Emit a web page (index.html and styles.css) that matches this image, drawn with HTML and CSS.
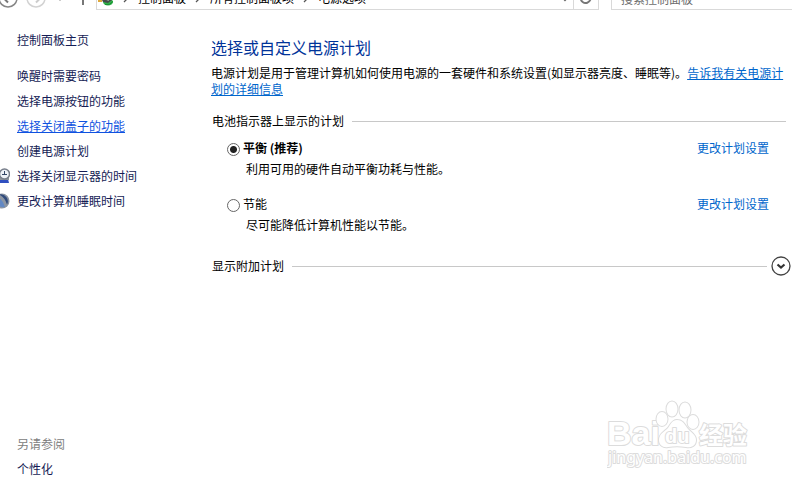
FILE: index.html
```html
<!DOCTYPE html>
<html lang="zh-CN">
<head>
<meta charset="utf-8">
<meta name="viewport" content="width=device-width, initial-scale=1">
<title>电源选项</title>
<link rel="stylesheet" href="styles.css">
</head>
<body>
<header class="toolbar">
  <button class="nav-button" type="button" aria-label="后退">
    <svg width="20" height="20" viewBox="0 0 20 20"><circle cx="10" cy="10" r="9" fill="none" stroke="#858585" stroke-width="1.5"/><path d="M15 10H6M10 5.500L5.500 10l4.500 4.500" fill="none" stroke="#777" stroke-width="2"/></svg>
  </button>
  <button class="nav-button" type="button" aria-label="前进">
    <svg width="20" height="20" viewBox="0 0 20 20"><circle cx="10" cy="10" r="9" fill="none" stroke="#d2d2d2" stroke-width="1.500"/><path d="M5 10h9M10 5.500l4.500 4.500-4.500 4.500" fill="none" stroke="#ccc" stroke-width="2"/></svg>
  </button>
  <button class="nav-button recent" type="button" aria-label="最近位置">
    <svg width="8" height="8" viewBox="0 0 8 8"><path d="M1 3l3 4 3-4z" fill="#777"/></svg>
  </button>
  <button class="nav-button up" type="button" aria-label="上移">
    <svg width="12" height="16" viewBox="0 0 12 16"><path d="M6 15V2M1 7l5-5 5 5" fill="none" stroke="#777" stroke-width="2"/></svg>
  </button>
  <nav class="address">
    <svg class="plug" width="16" height="16" viewBox="0 0 16 16"><ellipse cx="10" cy="12" rx="5" ry="3.500" fill="#31b34a"/><path d="M7 14.500q5 1 8-3" fill="none" stroke="#178c30"/><path d="M4 3l8 1 2 6-4 3-5-1-2-4z" fill="#454b49"/><path d="M6 8l5 2" stroke="#a5aaa8" stroke-width="2"/><path d="M0 11h4" stroke="#e0a93a" stroke-width="2"/></svg>
    <svg class="chevron" width="24" height="10" viewBox="0 0 24 10"><path d="M10 1l4 4-4 4" fill="none" stroke="#555" stroke-width="1.300"/></svg>
    <a href="#">控制面板</a>
    <svg class="chevron" width="24" height="10" viewBox="0 0 24 10"><path d="M10 1l4 4-4 4" fill="none" stroke="#555" stroke-width="1.300"/></svg>
    <a href="#">所有控制面板项</a>
    <svg class="chevron" width="24" height="10" viewBox="0 0 24 10"><path d="M10 1l4 4-4 4" fill="none" stroke="#555" stroke-width="1.300"/></svg>
    <a href="#">电源选项</a>
    <button class="history" type="button" aria-label="以前的位置"><svg width="8" height="8" viewBox="0 0 8 8"><path d="M0 2l4 4 4-4" fill="none" stroke="#666" stroke-width="2"/></svg></button>
    <button class="refresh" type="button" aria-label="刷新"><svg width="12" height="12" viewBox="0 0 12 12"><path d="M10 3.500A5 5 0 1 1 6 1" fill="none" stroke="#777" stroke-width="2"/></svg></button>
  </nav>
  <input class="search" type="search" placeholder="搜索控制面板" aria-label="搜索控制面板">
</header>

<div class="page">
  <aside class="sidebar">
    <a class="home" href="#">控制面板主页</a>
    <ul class="tasks">
      <li><a href="#">唤醒时需要密码</a></li>
      <li><a href="#">选择电源按钮的功能</a></li>
      <li><a class="active" href="#">选择关闭盖子的功能</a></li>
      <li><a href="#">创建电源计划</a></li>
      <li>
        <svg class="task-icon" width="16" height="16" viewBox="0 0 16 16"><path d="M4 11h10l1 4H3z" fill="#2f4fc0"/><path d="M3 9h12v3H3z" fill="#8b929b"/><circle cx="10.500" cy="6" r="5" fill="#eef2f7" stroke="#777e8a" stroke-width="1.500"/><path d="M10.500 3v3.500M8 6.500h5" fill="none" stroke="#344867"/></svg>
        <a href="#">选择关闭显示器的时间</a>
      </li>
      <li>
        <svg class="task-icon" width="16" height="16" viewBox="0 0 16 16"><circle cx="8" cy="8" r="7.500" fill="#8d96a3"/><path d="M5 1.500a7 7 0 0 1 8 10q-2-7-8-10z" fill="#2f4a7c"/><path d="M2 3q7 3 9 11-6 1-9-5z" fill="#6288c4"/></svg>
        <a href="#">更改计算机睡眠时间</a>
      </li>
    </ul>
    <div class="see-also">
      <span class="see-also-title">另请参阅</span>
      <a href="#">个性化</a>
    </div>
  </aside>

  <main class="content">
    <h1>选择或自定义电源计划</h1>
    <p class="intro">电源计划是用于管理计算机如何使用电源的一套硬件和系统设置(如显示器亮度、睡眠等)。<a href="#">告诉我有关电源计划的详细信息</a></p>

    <h2 class="divider">电池指示器上显示的计划</h2>
    <div class="plan">
      <input type="radio" name="plan" id="balanced" checked>
      <label class="recommended" for="balanced">平衡 (推荐)</label>
      <a href="#">更改计划设置</a>
      <p>利用可用的硬件自动平衡功耗与性能。</p>
    </div>
    <div class="plan">
      <input type="radio" name="plan" id="saver">
      <label for="saver">节能</label>
      <a href="#">更改计划设置</a>
      <p>尽可能降低计算机性能以节能。</p>
    </div>

    <div class="more">
      <h2 class="divider">显示附加计划</h2>
      <button type="button" aria-label="显示附加计划"><svg width="20" height="20" viewBox="0 0 20 20"><circle cx="10" cy="10" r="9" fill="#fff" stroke="#444" stroke-width="1.300"/><path d="M6.500 8.500l3.500 3 3.500-3" fill="none" stroke="#333" stroke-width="2.200"/></svg></button>
    </div>
  </main>
</div>

<svg class="watermark" width="144" height="70" viewBox="0 0 144 70" role="img" aria-label="Baidu 经验">
  <g class="outline">
    <text x="0" y="45" class="logo-latin">Bai</text>
    <ellipse cx="55" cy="19" rx="5.500" ry="7"/>
    <ellipse cx="65" cy="9" rx="5.500" ry="7.500"/>
    <ellipse cx="78" cy="10" rx="5.500" ry="7.500"/>
    <ellipse cx="86" cy="22" rx="5.500" ry="7"/>
    <path d="M70 20c6 0 8 5 11 9 4 4 8 6 8 11 0 6-5 8-10 7-6-1-12-1-18 0-5 1-9-2-9-7 0-6 5-8 9-12 3-4 4-8 9-8z"/>
    <text x="58" y="43" class="logo-du">du</text>
    <text x="92" y="44" class="logo-cjk">经验</text>
  </g>
  <text x="1" y="63" class="site">jingyan.baidu.com</text>
</svg>
</body>
</html>
```

FILE: styles.css
```css
* {
  box-sizing: border-box;
}

body {
  margin: 0;
  min-height: 100vh;
  display: flex;
  flex-direction: column;
  position: relative;
  overflow-x: hidden;
  background: #fff;
  color: #000;
  font: 12px/20px "Noto Sans CJK SC", sans-serif;
}

h1, h2, p, ul {
  margin: 0;
  padding: 0;
  font-weight: 400;
}

a {
  color: #0066cc;
  text-decoration: none;
}

button {
  padding: 0;
  border: 0;
  background: none;
}

svg {
  display: block;
  flex: none;
}

.toolbar {
  display: flex;
  align-items: center;
  height: 24px;
  margin-top: -14px;
}

.nav-button {
  flex: none;
  margin-right: 8px;
}

.nav-button:first-child {
  margin-left: -2px;
}

.recent {
  margin: 0 13px 0 2px;
}

.up {
  margin: 0 7px 0 0;
}

.address {
  flex: 1;
  display: flex;
  align-items: center;
  height: 24px;
  border: 1px solid #d9d9d9;
  padding-left: 1px;
}

.address a {
  color: #000;
}

.history {
  margin-left: auto;
  margin-right: 4px;
}

.refresh {
  height: 22px;
  padding: 0 6px;
  border-left: 1px solid #d9d9d9;
}

.search {
  width: 181px;
  height: 24px;
  margin-left: 12px;
  padding: 0 9px;
  border: 1px solid #d9d9d9;
  border-right: 0;
  font: inherit;
  background: #fff;
}

.search::placeholder {
  color: #6d6d6d;
}

.page {
  flex: 1;
  display: grid;
  grid-template-columns: 211px 1fr;
}

.sidebar {
  display: flex;
  flex-direction: column;
  padding: 17px 0 5px 17px;
  line-height: 25px;
}

.sidebar a {
  color: #151c55;
}

.tasks {
  margin-top: 11px;
  list-style: none;
}

.tasks li {
  display: flex;
  align-items: center;
}

.task-icon {
  margin-left: -23px;
  margin-right: 7px;
}

.sidebar .active {
  color: #0f52e0;
  text-decoration: underline;
}

.see-also {
  display: flex;
  flex-direction: column;
  margin-top: auto;
}

.see-also-title {
  color: #808080;
}

.content {
  padding-top: 25px;
}

h1 {
  color: #003399;
  font-size: 16px;
  line-height: 24px;
}

.intro {
  margin: 6px 6px 14px 0;
  line-height: 16px;
}

.intro a {
  text-decoration: underline;
}

.divider {
  display: flex;
  align-items: center;
  gap: 8px;
  margin: 0 6px 6px 1px;
  font-size: 12px;
}

.divider::after {
  content: "";
  flex: 1;
  height: 1px;
  background: #c8c8c8;
}

.plan {
  display: grid;
  grid-template-columns: 13px 1fr auto;
  column-gap: 3px;
  align-items: center;
  margin: 0 23px 14px 16px;
  line-height: 21px;
}

.plan input {
  appearance: none;
  width: 13px;
  height: 13px;
  margin: 4px 0 0;
  border: 1px solid #666;
  border-radius: 50%;
}

.plan input:checked {
  background: radial-gradient(circle, #222 3px, #fff 4px);
}

.plan p {
  grid-column: 2 / -1;
  padding-left: 3px;
}

.recommended {
  font-weight: 700;
}

.more {
  display: flex;
  align-items: center;
  margin-top: 21px;
}

.more .divider {
  flex: 1;
  margin: 0 4px 0 1px;
}

.more button {
  margin-right: 1px;
}

.watermark {
  position: absolute;
  right: 41px;
  bottom: 16px;
}

.outline,
.site {
  fill: #fff;
  stroke: #dcdcdc;
  stroke-width: 2px;
  stroke-linejoin: round;
  paint-order: stroke;
}

.logo-latin {
  font: 700 34px "Liberation Sans", sans-serif;
}

.logo-du {
  font: 700 20px "Liberation Sans", sans-serif;
}

.logo-cjk {
  font: 700 24px "Noto Sans CJK SC", sans-serif;
}

.site {
  font: 16px "Noto Sans", sans-serif;
}
```
